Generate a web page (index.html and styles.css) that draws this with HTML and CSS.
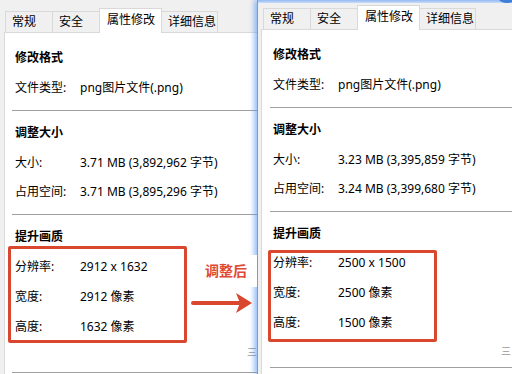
FILE: index.html
```html
<!DOCTYPE html>
<html lang="zh-CN">
<head>
<meta charset="utf-8">
<title>属性修改</title>
<link rel="stylesheet" href="styles.css">
</head>
<body>
<div class="desk">
  <div class="win win-a">
    <div class="tabs">
      <div class="tab">常规</div>
      <div class="tab">安全</div>
      <div class="tab tab-on">属性修改</div>
      <div class="tab">详细信息</div>
    </div>
    <div class="panel">
      <div class="head">修改格式</div>
      <div class="row row-first"><span class="k">文件类型:</span><span>png图片文件(.png)</span></div>
      <div class="sep"></div>
      <div class="head">调整大小</div>
      <div class="row row-first"><span class="k">大小:</span><span>3.71 MB (3,892,962 字节)</span></div>
      <div class="row"><span class="k">占用空间:</span><span>3.71 MB (3,895,296 字节)</span></div>
      <div class="sep"></div>
      <div class="head">提升画质</div>
      <div class="box">
        <div class="brow"><span class="k">分辨率:</span><span>2912 x 1632</span></div>
        <div class="brow"><span class="k">宽度:</span><span>2912 像素</span></div>
        <div class="brow"><span class="k">高度:</span><span>1632 像素</span></div>
      </div>
      <div class="clip">三</div>
      <div class="sep sep-end"></div>
    </div>
  </div>

  <div class="win win-b">
    <div class="titlebar"><span class="knob"></span></div>
    <div class="tabs">
      <div class="tab">常规</div>
      <div class="tab">安全</div>
      <div class="tab tab-on">属性修改</div>
      <div class="tab">详细信息</div>
    </div>
    <div class="panel">
      <div class="head">修改格式</div>
      <div class="row row-first"><span class="k">文件类型:</span><span>png图片文件(.png)</span></div>
      <div class="sep"></div>
      <div class="head">调整大小</div>
      <div class="row row-first"><span class="k">大小:</span><span>3.23 MB (3,395,859 字节)</span></div>
      <div class="row"><span class="k">占用空间:</span><span>3.24 MB (3,399,680 字节)</span></div>
      <div class="sep"></div>
      <div class="head">提升画质</div>
      <div class="box">
        <div class="brow"><span class="k">分辨率:</span><span>2500 x 1500</span></div>
        <div class="brow"><span class="k">宽度:</span><span>2500 像素</span></div>
        <div class="brow"><span class="k">高度:</span><span>1500 像素</span></div>
      </div>
      <div class="clip">三</div>
      <div class="sep sep-end"></div>
    </div>
  </div>

  <div class="note">调整后</div>
  <svg class="arrow" width="66" height="26" viewBox="0 0 66 26">
    <line x1="3" y1="13" x2="50" y2="13" stroke="#d9472f" stroke-width="4" stroke-linecap="round"/>
    <polygon points="46,3 62,13 46,23 50,13" fill="#d9472f"/>
  </svg>
</div>
</body>
</html>
```

FILE: styles.css
```css
* { box-sizing: border-box; }

html, body {
  margin: 0;
  padding: 0;
}

body {
  width: 512px;
  height: 374px;
  overflow: hidden;
  background: #f0f0f0;
  font-family: "Noto Sans", "Noto Sans CJK SC", sans-serif;
  font-size: 12px;
  color: #000;
}

.desk {
  position: relative;
  width: 512px;
  height: 374px;
  overflow: hidden;
}

.win {
  position: absolute;
  top: 0;
  height: 374px;
  background: #f0f0f0;
  display: flex;
  flex-direction: column;
}

.win-a {
  left: 0;
  width: 258px;
  z-index: 1;
}

.win-b {
  left: 257px;
  width: 255px;
  z-index: 2;
  border-left: 1px solid #6a9ff0;
  box-shadow: -3px 0 5px rgba(70, 140, 240, 0.55);
}

.titlebar {
  height: 3px;
  background: linear-gradient(#93b9f3, #c9ddfa);
  display: flex;
  justify-content: flex-end;
  flex: none;
}

.knob {
  width: 16px;
  height: 8px;
  margin-top: -5px;
  margin-right: -3px;
  border-radius: 50%;
  background: #3f7fd8;
}

/* tabs */
.tabs {
  display: flex;
  align-items: flex-end;
  flex: none;
  position: relative;
  z-index: 2;
}

.win-a .tabs { padding: 8px 0 0 5px; }
.win-b .tabs { padding: 2px 0 0 5px; }

.tab {
  height: 21px;
  padding: 2px 0 0 6px;
  line-height: 16px;
  border: 1px solid #d9d9d9;
  border-bottom: none;
  background: #f0f0f0;
  margin-left: -1px;
  white-space: nowrap;
}

.tab:first-child { margin-left: 0; }

.tab:nth-child(1) { width: 48px; }
.tab:nth-child(2) { width: 48px; }
.tab:nth-child(3) { width: 63px; }
.tab:nth-child(4) { width: 57px; }

.tab-on {
  height: 25px;
  padding: 3px 0 0 7px;
  background: #fff;
  margin-bottom: -1px;
  position: relative;
  z-index: 3;
}

/* panel */
.panel {
  flex: 1;
  background: #fff;
  border-top: 1px solid #d9d9d9;
  border-left: 1px solid #d9d9d9;
  padding-top: 17px;
  display: flex;
  flex-direction: column;
  position: relative;
}

.win-a .panel { margin-left: 4px; padding-left: 10px; }
.win-b .panel { margin-left: 3px; padding-left: 11px; }

.head {
  font-weight: 700;
  line-height: 16px;
  height: 16px;
}

.sep + .head { margin-top: 14px; }

.row, .brow {
  display: flex;
  line-height: 16px;
  height: 16px;
  white-space: nowrap;
}

.row { margin-top: 13px; }
.row-first { margin-top: 14px; }

.k {
  width: 65px;
  flex: none;
}

.sep {
  height: 1px;
  background: #a0a0a0;
  margin: 14px 0 0 -3px;
  flex: none;
}

/* annotation box */
.box {
  border: 3px solid #d9472f;
  border-radius: 2px;
  display: flex;
  flex-direction: column;
  gap: 14px;
  flex: none;
}

.win-a .box {
  width: 179px;
  margin: 1px 0 0 -7px;
  padding: 10px 0 5px 4px;
}

.win-b .box {
  width: 169px;
  margin: 8px 0 0 -5px;
  padding: 2px 0 8px 2px;
}

.clip {
  align-self: flex-end;
  color: #9a9a9a;
  font-size: 10px;
  line-height: 10px;
  height: 10px;
  margin-top: 4px;
  margin-right: 1px;
}

.win-a .sep-end { margin-top: 15px; }
.win-b .sep-end { margin-top: 11px; }

/* overlay annotation */
.note {
  position: absolute;
  left: 196px;
  top: 255px;
  width: 61px;
  height: 32px;
  background: #fff;
  color: #e04a35;
  font-weight: 700;
  font-size: 14px;
  line-height: 32px;
  padding-left: 9px;
  z-index: 5;
  white-space: nowrap;
}

.arrow {
  position: absolute;
  left: 190px;
  top: 290px;
  z-index: 5;
}
```
